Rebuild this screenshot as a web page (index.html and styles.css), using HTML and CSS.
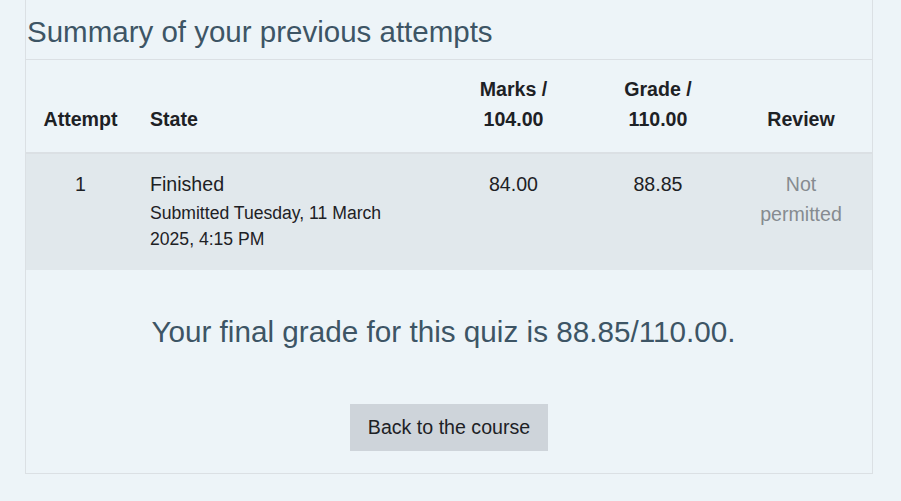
FILE: index.html
```html
<!DOCTYPE html>
<html lang="en">
<head>
<meta charset="utf-8">
<title>Summary of your previous attempts</title>
<link rel="stylesheet" href="styles.css">
</head>
<body>
<div class="page">
  <section class="card">
    <h3 class="card-title">Summary of your previous attempts</h3>
    <table class="attempts">
      <colgroup>
        <col class="c-attempt">
        <col class="c-state">
        <col class="c-marks">
        <col class="c-grade">
        <col class="c-review">
      </colgroup>
      <thead>
        <tr>
          <th class="center">Attempt</th>
          <th class="left">State</th>
          <th class="center">Marks / 104.00</th>
          <th class="center">Grade / 110.00</th>
          <th class="center">Review</th>
        </tr>
      </thead>
      <tbody>
        <tr>
          <td class="center">1</td>
          <td class="left">Finished<span class="stamp">Submitted Tuesday, 11 March 2025, 4:15 PM</span></td>
          <td class="center">84.00</td>
          <td class="center">88.85</td>
          <td class="center muted">Not permitted</td>
        </tr>
      </tbody>
    </table>
    <p class="final-grade">Your final grade for this quiz is 88.85/110.00.</p>
    <div class="actions">
      <button class="btn" type="button">Back to the course</button>
    </div>
  </section>
</div>
</body>
</html>
```
FILE: styles.css
```css
html, body {
  margin: 0;
  padding: 0;
}
body {
  background: #edf4f8;
  font-family: "Liberation Sans", Arial, sans-serif;
  font-size: 19.6px;
  line-height: 1.5;
  color: #1d2125;
}
.page {
  padding: 0 28px 0 25px;
}
.card {
  border: 1px solid #dbe0e4;
  border-top: none;
  padding-top: 14px;
  padding-bottom: 22px;
}
.card-title {
  margin: 0 0 10px 1px;
  font-size: 29.5px;
  font-weight: 400;
  line-height: 1.2;
  color: #3d5565;
}
.attempts {
  width: 100%;
  border-collapse: collapse;
  table-layout: fixed;
}
.c-attempt { width: 109px; }
.c-state { width: 306px; }
.c-marks { width: 145px; }
.c-grade { width: 144px; }
.c-review { width: auto; }
.attempts th,
.attempts td {
  padding: 15px 15px;
}
.attempts th {
  font-weight: 700;
  vertical-align: bottom;
  border-top: 1px solid #dbe0e4;
  border-bottom: 2px solid #dbe0e4;
  padding-bottom: 18px;
}
.attempts td {
  vertical-align: top;
  background: #e1e8ec;
  padding-top: 16px;
  padding-bottom: 18px;
}
.center { text-align: center; }
.left { text-align: left; }
.muted { color: #868b90; }
.stamp {
  display: block;
  font-size: 17.6px;
  line-height: 1.5;
}
.final-grade {
  margin: 44px 0 0;
  padding-right: 11px;
  text-align: center;
  font-size: 29.7px;
  line-height: 1.2;
  color: #3d5565;
}
.actions {
  display: flex;
  justify-content: center;
  margin-top: 54px;
}
.btn {
  font-family: inherit;
  font-size: 19.6px;
  line-height: 1.5;
  color: #1d2125;
  background: #ced4da;
  border: none;
  border-radius: 0;
  padding: 9px 18px;
}
```
